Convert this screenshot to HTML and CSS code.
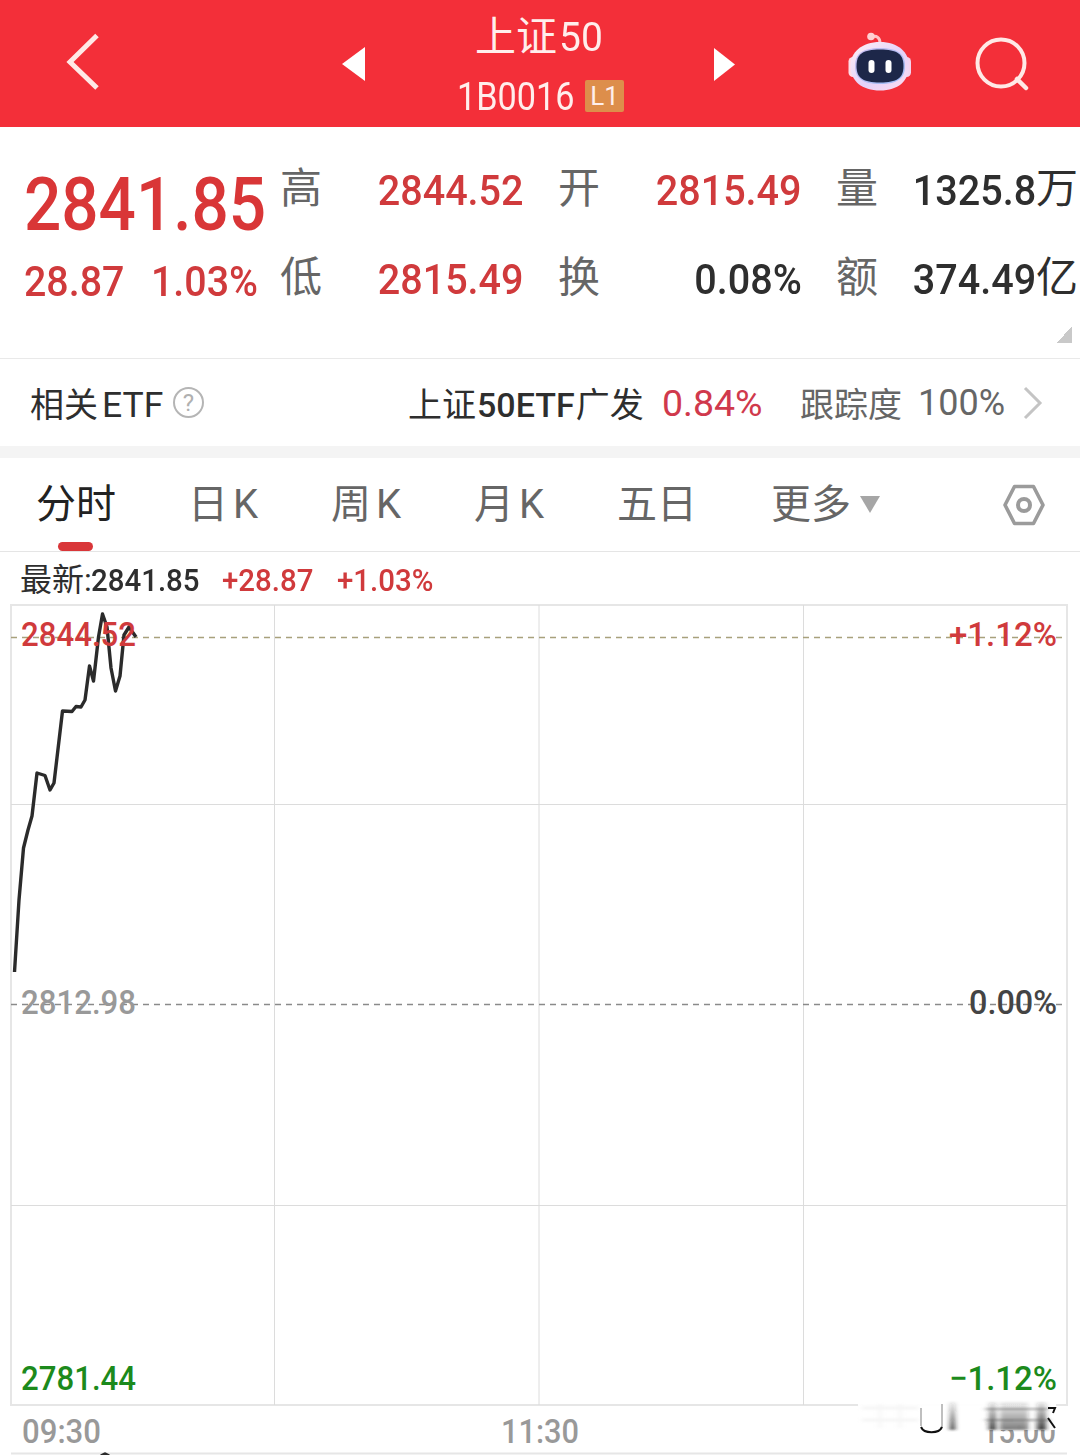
FILE: index.html
```html
<!DOCTYPE html>
<html lang="zh-CN">
<head>
  <meta charset="utf-8">
  <title>上证50</title>
  <link rel="stylesheet" href="styles.css">
</head>
<body>
  <header class="topbar">
    <svg class="back" width="36" height="60" viewBox="0 0 36 60"><path d="M33 3.500L6 30L33 56" fill="none" stroke="#ffe9e6" stroke-width="5"/></svg>
    <svg class="prev" width="23" height="36" viewBox="0 0 23 36"><path d="M23 1V35L0 18Z" fill="#fff"/></svg>
    <div class="title">
      <div class="name">上证<span class="num">50</span></div>
      <div class="code"><span class="num">1B0016</span><span class="level">L1</span></div>
    </div>
    <svg class="next" width="22" height="34" viewBox="0 0 22 34"><path d="M0 0V33L21 16.500Z" fill="#fff"/></svg>
    <svg class="robot" width="64" height="60" viewBox="0 0 64 60">
      <defs>
        <linearGradient id="head" x1="0" y1="0" x2="1" y2="1">
          <stop offset="0" stop-color="#fff0f5"/>
          <stop offset=".55" stop-color="#e4d2fa"/>
          <stop offset="1" stop-color="#ffdcee"/>
        </linearGradient>
        <linearGradient id="rim" x1="0" y1="0" x2="1" y2="1">
          <stop offset="0" stop-color="#c9bdf0"/>
          <stop offset="1" stop-color="#9dbcf5"/>
        </linearGradient>
      </defs>
      <path d="M23 5C29 3 32 6 32 11" fill="none" stroke="#ffc3c8" stroke-width="3"/>
      <circle cx="23" cy="4.500" r="3.800" fill="#ffd0d2"/>
      <rect x="0.500" y="25" width="10" height="20" rx="4.500" fill="#ffdbe6"/>
      <rect x="53" y="25" width="10" height="20" rx="4.500" fill="#f5d3ee"/>
      <path d="M32 10C50 10 61 20 61 34C61 49 50 58.500 32 58.500C14 58.500 2.500 49 2.500 34C2.500 20 14 10 32 10Z" fill="url(#head)"/>
      <path d="M32 16C50 16 57 22 57 34C57 46 50 52 32 52C14 52 7 46 7 34C7 22 14 16 32 16Z" fill="url(#rim)"/>
      <path d="M32 17.500C49 17.500 55.500 22 55.500 34C55.500 46 49 50.500 32 50.500C15 50.500 8.500 46 8.500 34C8.500 22 15 17.500 32 17.500Z" fill="#1d2749"/>
      <rect x="20.500" y="28" width="6" height="13" rx="3" fill="#fff"/>
      <rect x="37.500" y="28" width="6" height="13" rx="3" fill="#fff"/>
    </svg>
    <svg class="search" width="56" height="56" viewBox="0 0 56 56"><circle cx="26" cy="27" r="23.500" fill="none" stroke="#ffe9e6" stroke-width="4"/><path d="M42 43L51 52" stroke="#ffe9e6" stroke-width="4.500" stroke-linecap="round"/></svg>
  </header>

  <section class="quote">
    <div class="last">
      <div class="price"><span class="num">2841.85</span></div>
      <div class="change"><span class="num diff">28.87</span><span class="num">1.03%</span></div>
    </div>
    <dl class="stats">
      <div><dt>高</dt><dd class="red"><span class="num">2844.52</span></dd></div>
      <div><dt>开</dt><dd class="red"><span class="num">2815.49</span></dd></div>
      <div><dt>量</dt><dd class="unit"><span class="num">1325.8</span>万</dd></div>
      <div><dt>低</dt><dd class="red"><span class="num">2815.49</span></dd></div>
      <div><dt>换</dt><dd><span class="num">0.08%</span></dd></div>
      <div><dt>额</dt><dd class="unit"><span class="num">374.49</span>亿</dd></div>
    </dl>
    <span class="corner"></span>
  </section>

  <section class="etf">
    <span class="etf-label">相关<span class="latin">ETF</span></span>
    <span class="help">?</span>
    <span class="etf-name">上证<span class="num">50ETF</span>广发</span>
    <span class="etf-pct">0.84%</span>
    <span class="track">跟踪度</span>
    <span class="track-pct">100%</span>
    <svg class="more" width="20" height="34" viewBox="0 0 20 34"><path d="M2 2L17 17L2 32" fill="none" stroke="#c4c4c4" stroke-width="3"/></svg>
  </section>

  <nav class="tabs">
    <span class="tab active">分时</span>
    <span class="tab">日<i>K</i></span>
    <span class="tab">周<i>K</i></span>
    <span class="tab">月<i>K</i></span>
    <span class="tab days">五日</span>
    <span class="tab all">更多</span>
    <svg class="caret" width="20" height="17" viewBox="0 0 20 17"><path d="M0 0H20L10 17Z" fill="#a6a6a6"/></svg>
    <svg class="settings" width="44" height="42" viewBox="0 0 44 42"><path d="M12.500 2.500H31.500L41 21L31.500 39.500H12.500L3 21Z" fill="none" stroke="#9b9b9b" stroke-width="3.600" stroke-linejoin="round"/><circle cx="22" cy="21" r="6" fill="none" stroke="#9b9b9b" stroke-width="4"/></svg>
  </nav>

  <div class="latest">
    <span class="latest-label">最新:</span>
    <span class="num latest-price">2841.85</span>
    <span class="num red latest-diff">+28.87</span>
    <span class="num red">+1.03%</span>
  </div>

  <svg class="chart" width="1080" height="851" viewBox="0 604 1080 851">
    <defs>
      <filter id="soft" x="-20%" y="-20%" width="140%" height="140%"><feGaussianBlur stdDeviation="2.500 1"/></filter>
      <linearGradient id="fade" x1="0" y1="0" x2="0" y2="1">
        <stop offset="0" stop-color="#222" stop-opacity=".1"/>
        <stop offset="1" stop-color="#222" stop-opacity=".9"/>
      </linearGradient>
    </defs>
    <!-- grid -->
    <path class="frame" d="M11 605H1067V1405H11Z M11 1453.500H1067"/>
    <path class="grid" d="M274.500 605V1405 M539 605V1405 M803.500 605V1405 M11 804.500H1067 M11 1205.500H1067"/>
    <path class="dash high" d="M11 637.500H1067"/>
    <path class="dash" d="M11 1004.500H1067"/>
    <!-- price line -->
    <path class="line" d="M14.500 972L19 900L23.500 848L28 830L32 816L37 773L45 775.500L50 790L54 783L62.500 711L72 711.500L76 706.500L81 707L85 700L89.500 666L93.500 681L98.500 637L102.500 614L107 627L111 668L115.500 691L120 676L124 635L129 627L136 637"/>
    <path class="line" d="M101 1456L105 1454L109 1456"/>

    <text class="axis red" x="21" y="646" textLength="115" lengthAdjust="spacingAndGlyphs">2844.52</text>
    <text class="axis red" x="949" y="646" textLength="108" lengthAdjust="spacingAndGlyphs">+1.12%</text>
    <text class="axis gray" x="21" y="1014" textLength="115" lengthAdjust="spacingAndGlyphs">2812.98</text>
    <text class="axis dark" x="969" y="1014" textLength="88" lengthAdjust="spacingAndGlyphs">0.00%</text>
    <text class="axis green" x="21" y="1390" textLength="115" lengthAdjust="spacingAndGlyphs">2781.44</text>
    <text class="axis green" x="949" y="1390" textLength="108" lengthAdjust="spacingAndGlyphs">−1.12%</text>
    <text class="axis gray" x="22" y="1443" textLength="79" lengthAdjust="spacingAndGlyphs">09:30</text>
    <text class="axis gray" x="501" y="1443" textLength="78" lengthAdjust="spacingAndGlyphs">11:30</text>
    <text class="axis gray" x="982" y="1443" textLength="74" lengthAdjust="spacingAndGlyphs">15:00</text>

    <!-- smudge over the last time label -->
    <rect x="858" y="1403" width="198" height="27" fill="#fff" opacity=".94"/>
    <g filter="url(#soft)">
      <path d="M862 1408H918M862 1420H918M880 1404V1428M900 1404V1428" stroke="#bbb" stroke-width="3" opacity=".15"/>
      <rect x="950" y="1402" width="5" height="28" fill="url(#fade)"/>
      <rect x="989" y="1402" width="7" height="28" fill="url(#fade)"/>
      <rect x="1000" y="1402" width="28" height="28" fill="url(#fade)" opacity=".65"/>
      <rect x="1037" y="1402" width="9" height="28" fill="url(#fade)"/>
      <path d="M985 1409H1048M985 1420H1050" stroke="#555" stroke-width="2" opacity=".45"/>
    </g>
    <path d="M942 1428V1404M921 1426V1408" fill="none" stroke="#555" stroke-width="1.500" opacity=".5"/>
    <path d="M921 1427C924 1434 939 1434 942 1427M1048 1408H1055L1053 1413M1048 1418L1055 1428" fill="none" stroke="#111" stroke-width="2"/>
  </svg>
</body>
</html>
```
FILE: styles.css
```css
body {
  margin: 0;
  width: 1080px;
  height: 1455px;
  overflow: hidden;
  background-color: #fff;
  color: #2e2e2e;
  font-family: Roboto, "Noto Sans CJK SC", sans-serif;
}

svg {
  display: block;
  flex: none;
}

.num {
  display: inline-block;
  font-weight: 500;
  transform: scaleX(0.92);
  transform-origin: left;
}

.red {
  color: #d03a3c;
}

/* header */
.topbar {
  display: flex;
  height: 127px;
  background-color: #f32f39;
  color: #ffeeec;
}

.back {
  margin: 32px 0 0 64px;
}

.prev {
  margin: 46px 0 0 242px;
}

.title {
  width: 260px;
  margin-left: 48px;
}

.name {
  height: 74px;
  margin-left: 62px;
  font-size: 41px;
  line-height: 74px;
  white-space: nowrap;
}

.name .num {
  margin-left: 2px;
  font-weight: 400;
  transform: scaleX(0.95);
}

.code {
  display: flex;
  align-items: center;
  height: 46px;
  margin-left: 44px;
  font-size: 38px;
}

.code .num {
  width: 128px;
  font-weight: 400;
  transform: scaleX(0.9);
}

.level {
  width: 39px;
  height: 32px;
  margin-top: -2px;
  background-color: #dd8e4b;
  border-radius: 2px;
  font-size: 26px;
  line-height: 32px;
  text-align: center;
}

.next {
  margin: 48px 0 0 41px;
}

.robot {
  margin: 32px 0 0 112px;
}

.search {
  margin: 36px 0 0 63px;
}

/* quote */
.quote {
  position: relative;
  display: flex;
  height: 231px;
  border-bottom: 1px solid #e9e9e9;
}

.last {
  width: 256px;
  padding: 37px 0 0 24px;
  color: #d93637;
}

.price {
  height: 80px;
  font-size: 75px;
  line-height: 80px;
}

.price .num {
  transform: scaleX(0.875);
}

.change {
  display: flex;
  height: 74px;
  color: #d03a3c;
  font-size: 43px;
  line-height: 74px;
}

.change .num {
  transform: scaleX(0.915);
}

.diff {
  width: 127px;
}

.stats {
  display: grid;
  grid-template-columns: repeat(3, 242px);
  grid-auto-rows: 89px;
  column-gap: 36px;
  margin: 18px 0 0;
}

.stats div {
  display: flex;
  justify-content: space-between;
  font-size: 42px;
  line-height: 88px;
  white-space: nowrap;
}

.stats dt {
  color: #666;
}

.stats dd {
  display: flex;
  margin: 0 -2px 0 0;
}

.stats .unit {
  margin-right: 0;
}

.stats .num {
  font-size: 43px;
  line-height: 90px;
  transform-origin: right;
}

.corner {
  position: absolute;
  right: 8px;
  bottom: 15px;
  width: 16px;
  height: 16px;
  background: linear-gradient(135deg, #fff 50%, #c9c9c9 50%);
}

/* related ETF */
.etf {
  display: flex;
  align-items: center;
  height: 87px;
  border-bottom: 12px solid #f4f4f4;
  font-size: 34px;
  white-space: nowrap;
}

.etf-label {
  width: 143px;
  margin-left: 30px;
}

.latin {
  margin-left: 4px;
  font-size: 35.5px;
}

.help {
  box-sizing: border-box;
  width: 31px;
  height: 31px;
  border: 2px solid #b5b5b5;
  border-radius: 50%;
  color: #b0b0b0;
  font-size: 24px;
  line-height: 28px;
  text-align: center;
}

.etf-name {
  width: 254px;
  margin-left: 204px;
}

.etf-name .num {
  margin: 0 1px 0 1px;
  transform: none;
}

.etf-pct {
  width: 138px;
  color: #d0394c;
  font-size: 37.5px;
}

.track {
  width: 118px;
  color: #666;
}

.track-pct {
  width: 105px;
  color: #666;
  font-size: 36px;
}

/* tabs */
.tabs {
  display: flex;
  height: 93px;
  border-bottom: 1px solid #e5e5e5;
  color: #666;
  font-size: 40px;
  line-height: 94px;
  white-space: nowrap;
}

.tab {
  position: relative;
  width: 143px;
}

.tab i {
  margin-left: 5px;
  font-style: normal;
}

.active {
  width: 152px;
  margin-left: 36px;
  color: #222;
}

.active::after {
  content: "";
  position: absolute;
  left: 22px;
  bottom: 0;
  width: 35px;
  height: 9px;
  border-radius: 5px;
  background-color: #d93639;
}

.days {
  width: 154px;
}

.all {
  width: 89px;
}

.caret {
  margin-top: 38px;
}

.settings {
  margin: 26px 0 0 122px;
}

/* latest price line */
.latest {
  display: flex;
  height: 52px;
  padding-left: 20px;
  font-size: 32px;
  line-height: 56px;
  white-space: nowrap;
}

.latest-label {
  width: 71px;
}

.latest-price {
  width: 131px;
}

.latest-diff {
  width: 115px;
}

/* chart */
.chart path {
  fill: none;
}

.frame {
  stroke: #e6e6e6;
  stroke-width: 2;
}

.grid {
  stroke: #dcdcdc;
  stroke-width: 1;
}

.dash {
  stroke: #8a8a8a;
  stroke-width: 1.5;
  stroke-dasharray: 6 5;
}

.high {
  stroke: #a8a17c;
}

.line {
  stroke: #2b2b2b;
  stroke-width: 3.4;
  stroke-linejoin: round;
}

.axis {
  font-size: 34px;
  font-weight: 500;
}

.axis.red {
  fill: #d03a3c;
}

.axis.gray {
  fill: #999;
}

.axis.dark {
  fill: #444;
}

.axis.green {
  fill: #1c8a1c;
}
```
